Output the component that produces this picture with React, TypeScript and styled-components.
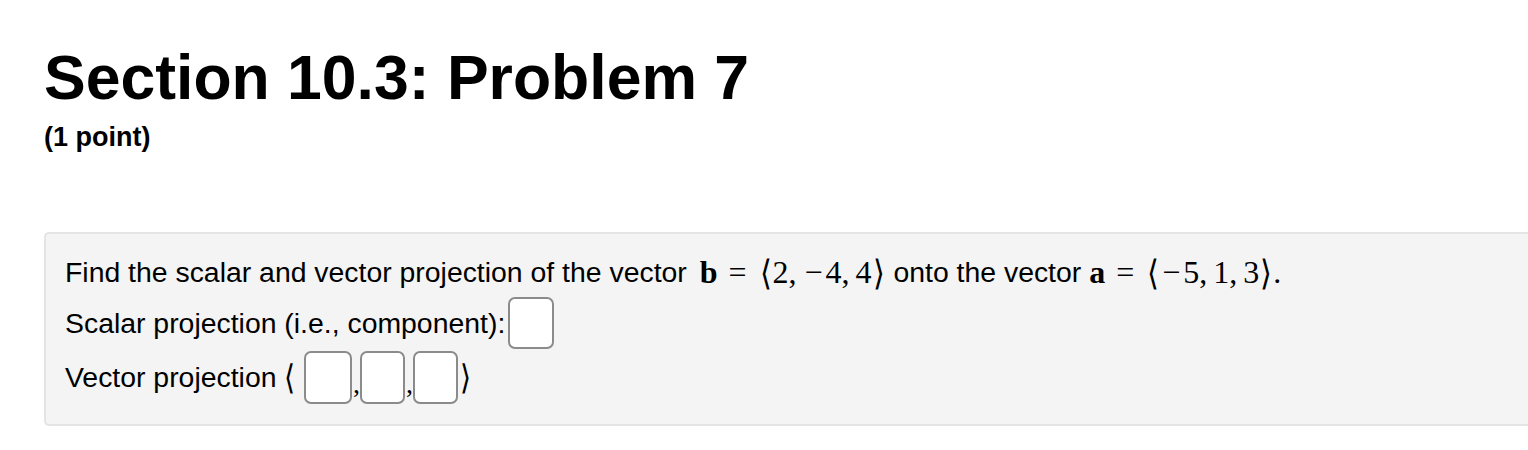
import React from "react";
import styled, { createGlobalStyle } from "styled-components";

const Global = createGlobalStyle`
  html, body { margin: 0; padding: 0; background: #ffffff; }
  body { font-family: "Liberation Sans", Arial, Helvetica, sans-serif; color: #000; }
`;

const Page = styled.div`
  padding: 42px 0 0 44px;
  overflow: hidden;
  width: 1528px;
  box-sizing: border-box;
`;

const Title = styled.h1`
  margin: 0;
  font-size: 62.5px;
  line-height: 71px;
  font-weight: 700;
`;

const Points = styled.div`
  margin-top: 9px;
  font-size: 27px;
  line-height: 30px;
  font-weight: 700;
`;

const ProblemBox = styled.div`
  margin-top: 80px;
  width: 1500px;
  box-sizing: border-box;
  background: #f4f4f4;
  border: 2px solid #e4e4e4;
  border-right: none;
  border-radius: 5px 0 0 5px;
  padding: 16px 0 20px 19px;
  font-size: 28.4px;
`;

const Row = styled.div<{ $h: number; $gap?: number }>`
  display: flex;
  align-items: center;
  height: ${(p) => p.$h}px;
  margin-bottom: ${(p) => p.$gap ?? 0}px;
  white-space: pre;
`;

const Math = styled.span<{ $lead?: number }>`
  display: inline-flex;
  align-items: baseline;
  margin-left: ${(p) => p.$lead ?? 0}px;
  font-family: "Liberation Serif", "Times New Roman", serif;
  font-size: 32px;
`;

const Bold = styled.span`
  font-weight: 700;
`;

const Rel = styled.span`
  margin: 0 12px 0 11px;
`;

const Minus = styled.span`
  margin: 0 3px 0 2px;
`;

const Fence = styled.span`
  font-family: "DejaVu Sans", sans-serif;
  font-weight: 200;
  font-size: 30px;
  transform: scaleY(1.15);
  display: inline-block;
  margin: 0 1px;
`;

const Sep = styled.span`
  margin-right: 6px;
`;

const AnswerInput = styled.input<{ $w?: number; $h?: number; $ml?: number }>`
  box-sizing: border-box;
  width: ${(p) => p.$w ?? 46}px;
  height: ${(p) => p.$h ?? 53}px;
  margin: 0 0 0 ${(p) => p.$ml ?? 0}px;
  border: 2px solid #8b8b8b;
  border-radius: 7px;
  background: #ffffff;
  padding: 0;
  outline: none;
`;

const Comma = styled.span`
  font-family: "Liberation Serif", serif;
  font-size: 28px;
  align-self: flex-end;
  margin-bottom: 4px;
  width: 8px;
  text-align: center;
`;

const VecFence = styled.span<{ $before?: number; $after?: number }>`
  font-family: "DejaVu Sans", sans-serif;
  font-weight: 200;
  font-size: 28px;
  display: inline-block;
  transform: scaleY(1.2);
  margin-left: ${(p) => p.$before ?? 0}px;
  margin-right: ${(p) => p.$after ?? 0}px;
`;

export default function App() {
  return (
    <>
      <Global />
      <Page>
        <Title>Section 10.3: Problem 7</Title>
        <Points>(1 point)</Points>
        <ProblemBox>
          <Row $h={44} $gap={2}>
            {"Find the scalar and vector projection of the vector "}
            <Math $lead={5}>
              <Bold>b</Bold>
              <Rel>=</Rel>
              <Fence>⟨</Fence>2<Sep>,</Sep>
              <Minus>−</Minus>4<Sep>,</Sep>4<Fence>⟩</Fence>
            </Math>
            {" onto the vector "}
            <Math>
              <Bold>a</Bold>
              <Rel>=</Rel>
              <Fence>⟨</Fence>
              <Minus>−</Minus>5<Sep>,</Sep>1<Sep>,</Sep>3<Fence>⟩</Fence>.
            </Math>
          </Row>
          <Row $h={54} $gap={1}>
            {"Scalar projection (i.e., component):"}
            <AnswerInput aria-label="scalar projection" $w={46} $h={52} $ml={3} />
          </Row>
          <Row $h={53}>
            {"Vector projection "}
            <VecFence $before={0} $after={9}>⟨</VecFence>
            <AnswerInput aria-label="vector x" $w={48} />
            <Comma>,</Comma>
            <AnswerInput aria-label="vector y" $w={45} />
            <Comma>,</Comma>
            <AnswerInput aria-label="vector z" $w={45} />
            <VecFence $before={2}>⟩</VecFence>
          </Row>
        </ProblemBox>
      </Page>
    </>
  );
}
